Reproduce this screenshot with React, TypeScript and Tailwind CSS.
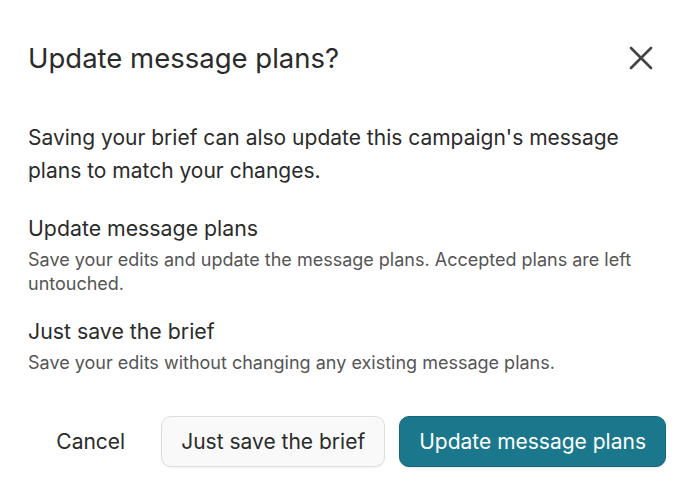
import { X } from "lucide-react";

export default function App() {
  return (
    <div
      className="w-[694px] h-[500px] bg-white text-[#2b2b2b] px-7 pt-[38px]"
      style={{ fontFamily: "Inter, 'Noto Sans', sans-serif" }}
    >
      {/* Header */}
      <div className="flex h-10 items-center justify-between">
        <h2 className="text-[27.5px] leading-10 font-normal">Update message plans?</h2>
        <button className="mr-[5px] text-[#444444]">
          <X size={40} strokeWidth={1.6} />
        </button>
      </div>

      {/* Body */}
      <p className="mt-[43px] text-[21px] leading-[33px] pr-4">
        Saving your brief can also update this campaign's message plans to match your changes.
      </p>

      <div className="mt-[27px]">
        <h3 className="text-[21.3px] leading-7">Update message plans</h3>
        <p className="mt-[6px] text-[18px] leading-6 text-[#555555] pr-6">
          Save your edits and update the message plans. Accepted plans are left untouched.
        </p>
      </div>

      <div className="mt-[21px]">
        <h3 className="text-[21.3px] leading-7">Just save the brief</h3>
        <p className="mt-[6px] text-[18px] leading-6 text-[#555555]">
          Save your edits without changing any existing message plans.
        </p>
      </div>

      {/* Footer */}
      <div className="mt-[41px] flex items-center justify-end gap-[14px]">
        <button className="h-[51px] px-[22px] text-[21px] text-[#2b2b2b] rounded-[10px]">Cancel</button>
        <button className="h-[51px] px-[19px] text-[21px] text-[#2b2b2b] bg-[#f9f9f9] border border-[#dedede] rounded-[10px] shadow-[0_1px_2px_rgba(0,0,0,0.06)]">
          Just save the brief
        </button>
        <button className="h-[51px] px-[19px] text-[21px] text-white bg-[#1b788c] border border-[#16677a] rounded-[10px] shadow-[0_1px_2px_rgba(0,0,0,0.1)]">
          Update message plans
        </button>
      </div>
    </div>
  );
}
